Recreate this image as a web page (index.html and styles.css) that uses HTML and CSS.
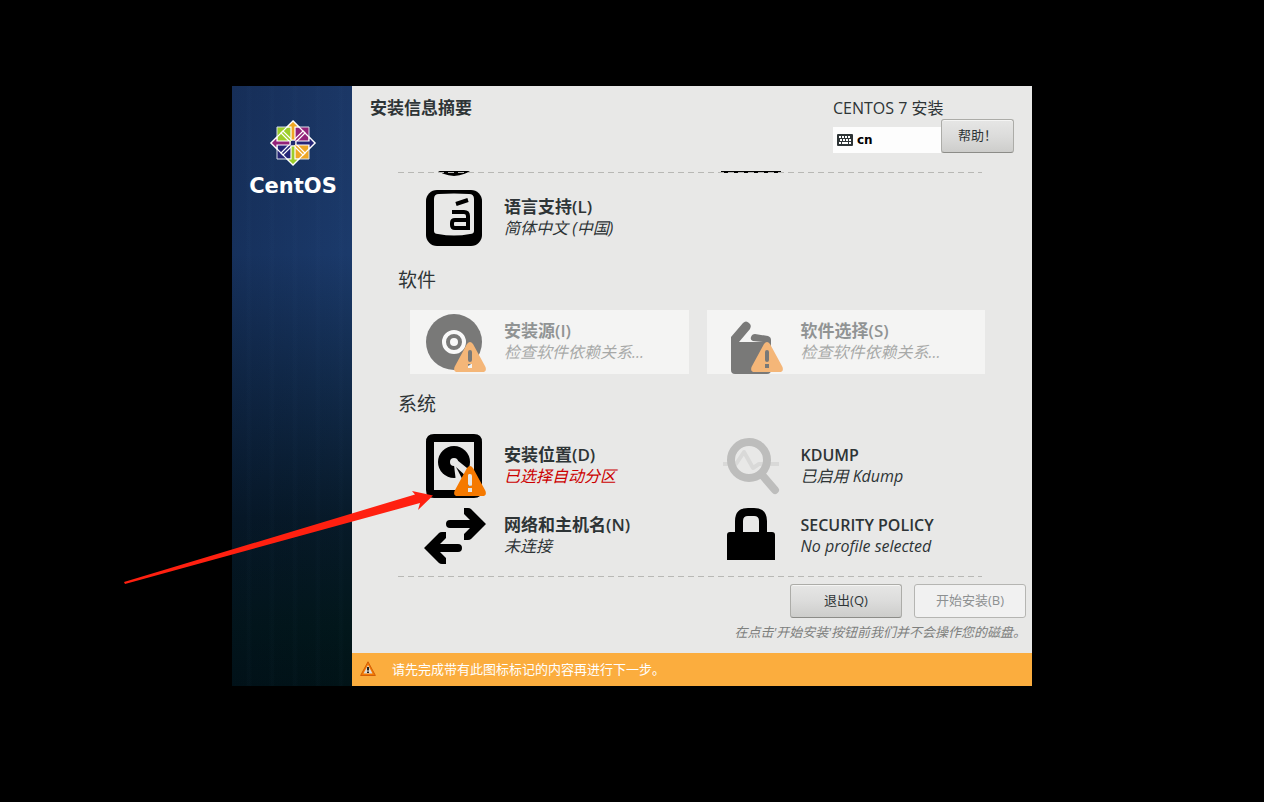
FILE: index.html
```html
<!DOCTYPE html>
<html lang="zh-CN">
<head>
<meta charset="utf-8">
<title>安装信息摘要</title>
<link rel="stylesheet" href="styles.css">
</head>
<body>
<svg class="defs" aria-hidden="true">
  <symbol id="warn" viewBox="0 0 64 64">
    <path fill="#f57900" fill-rule="evenodd" d="M45 34Q48 30 51 34L63.500 57Q65 62 60.500 62H35.500Q31 62 32.500 57ZM48 40Q46 40 46 42V50Q46 52 48 52T50 50V42Q50 40 48 40ZM46 54V58H50V54Z"/>
  </symbol>
</svg>
<div class="window">
  <aside class="sidebar">
    <svg class="emblem" viewBox="-24 -24 48 48" aria-hidden="true">
      <g stroke="#d8dfe8" stroke-width="1">
        <path fill="#9ccd2a" d="M-16-16H-1V-1H-16Z"/><path fill="#932279" d="M1-16H16V-1H1Z"/>
        <path fill="#262577" d="M-16 1H-1V16H-16Z"/><path fill="#efa724" d="M1 1H16V16H1Z"/>
      </g>
      <g stroke="#fff" stroke-width="1.200" fill="none">
        <path d="M0-22L22 0L0 22L-22 0Z"/>
        <path fill="#9ccd2a" d="M-3-1L-12-10L-10-12L-1-3"/><path fill="#932279" d="M3-1L12-10L10-12L1-3"/>
        <path fill="#262577" d="M-3 1L-12 10L-10 12L-1 3"/><path fill="#efa724" d="M3 1L12 10L10 12L1 3"/>
        <path fill="#efa724" d="M0-22L6-16H2V-3H-2V-16H-6Z"/><path fill="#262577" d="M22 0L16 6V2H3V-2H16V-6Z"/>
        <path fill="#9ccd2a" d="M0 22L6 16H2V3H-2V16H-6Z"/><path fill="#932279" d="M-22 0L-16 6V2H-3V-2H-16V-6Z"/>
      </g>
      <path fill="#202c70" d="M-2-2H2V2H-2Z"/>
    </svg>
    <div class="brand">CentOS</div>
  </aside>

  <main class="content">
    <header class="header">
      <h1 class="page-title">安装信息摘要</h1>
      <div class="header-tools">
        <div class="product">
          <div class="product-name">CENTOS 7 安装</div>
          <button class="layout-button" type="button">
            <svg class="layout-icon" viewBox="0 0 16 12" aria-hidden="true"><rect width="16" height="12" rx="1" fill="#2e3436"/><path stroke="#fff" stroke-width="2" d="M2 3H14" stroke-dasharray="2 1"/><path stroke="#fff" stroke-width="2" d="M3 6H14" stroke-dasharray="2 1"/><path stroke="#fff" stroke-width="2" d="M2 9H4M5 9H11M12 9H14"/></svg>
            cn
          </button>
        </div>
        <button class="button help" type="button">帮助！</button>
      </div>
    </header>

    <div class="viewport">
      <div class="row clipped">
        <svg class="icon" viewBox="0 0 64 64" aria-hidden="true"><circle cx="32" cy="32" r="28"/></svg>
        <svg class="icon" viewBox="0 0 64 64" aria-hidden="true"><rect x="2" y="16" width="60" height="41" rx="1"/></svg>
      </div>
      <div class="row">
        <button class="spoke" type="button">
          <svg class="icon" viewBox="0 0 64 64" aria-hidden="true"><rect x="4" y="4" width="56" height="56" rx="11"/><path fill="#e8e8e7" d="M17 8Q32 7 47 8Q52 8 52 13V45Q52 48 48 48Q32 51 16 48Q12 48 12 45V13Q12 8 17 8Z"/><path fill="none" stroke="#000" stroke-width="4" d="M34 18L46 14M30 26H42Q46 26 46 30V42H33Q30 42 30 39V37Q30 34 33 34H46"/></svg>
          <span class="text"><span class="name">语言支持(L)</span><span class="status">简体中文 (中国)</span></span>
        </button>
      </div>

      <h2 class="section">软件</h2>
      <div class="row">
        <button class="spoke" type="button" disabled>
          <svg class="icon" viewBox="0 0 64 64" aria-hidden="true"><circle cx="32" cy="32" r="28"/><circle cx="32" cy="32" r="10" fill="none" stroke="#fff" stroke-width="4"/><circle cx="32" cy="32" r="4" fill="#fff"/><use href="#warn"/></svg>
          <span class="text"><span class="name">安装源(I)</span><span class="status">检查软件依赖关系...</span></span>
        </button>
        <button class="spoke" type="button" disabled>
          <svg class="icon" viewBox="0 0 64 64" aria-hidden="true"><path d="M12 32L16 30L20 32H48L52 30V60Q52 64 48 64H16Q12 64 12 60Z"/><path d="M12 33V27L24 13Q27 10 30 13Q33 15 31 19L20 32ZM36 24L49 26Q52 27 52 30V34H44V32L34 31Q31 30 32 27Q33 24 36 24Z"/><use href="#warn"/></svg>
          <span class="text"><span class="name">软件选择(S)</span><span class="status">检查软件依赖关系...</span></span>
        </button>
      </div>

      <h2 class="section">系统</h2>
      <div class="row">
        <button class="spoke" type="button">
          <svg class="icon" viewBox="0 0 64 64" aria-hidden="true"><path fill-rule="evenodd" d="M12 0H52Q60 0 60 8V56Q60 64 52 64H12Q4 64 4 56V8Q4 0 12 0ZM12 8V56H52V8Z"/><circle cx="32" cy="28" r="16"/><circle cx="32" cy="28" r="4" fill="#e8e8e7"/><path fill="#e8e8e7" d="M32 31L35 26L50 38V48H34Z"/><path d="M34 33L46 44L50 54H45Z"/><use href="#warn"/><path fill="#e8e8e7" d="M46 42Q46 40 48 40V48L50 44V50Q50 52 48 52T46 50ZM48 54H50V58H46V56H48Z"/></svg>
          <span class="text"><span class="name">安装位置(D)</span><span class="status alert">已选择自动分区</span></span>
        </button>
        <button class="spoke" type="button">
          <svg class="icon" viewBox="0 0 64 64" aria-hidden="true"><path fill="none" stroke="#d9d9d8" stroke-width="4" stroke-linejoin="round" d="M4 30H17L25 18L34 34L40 30H60"/><circle cx="30" cy="26" r="18" fill="none" stroke="#bdbdbc" stroke-width="8"/><path stroke="#bdbdbc" stroke-width="8" stroke-linecap="round" d="M44 42L56 56"/></svg>
          <span class="text"><span class="name latin">KDUMP</span><span class="status">已启用 Kdump</span></span>
        </button>
        <button class="spoke" type="button">
          <svg class="icon" viewBox="0 0 64 64" aria-hidden="true"><path d="M42 4H46Q48 4 49 5L64 20L49 35Q48 36 46 36H42V30L48 24H28Q24 24 24 20T28 16H48L42 10Z"/><path d="M24 28H20Q18 28 17 29L2 44L17 59Q18 60 20 60H24V54L18 48H36Q40 48 40 44T36 40H18L24 34Z"/></svg>
          <span class="text"><span class="name">网络和主机名(N)</span><span class="status">未连接</span></span>
        </button>
        <button class="spoke" type="button">
          <svg class="icon" viewBox="0 0 64 64" aria-hidden="true"><rect x="8" y="28" width="48" height="28" rx="3"/><path d="M8 40H56V56H8Z"/><path fill="none" stroke="#000" stroke-width="8" d="M20 32V17Q20 8 29 8H35Q44 8 44 17V32"/></svg>
          <span class="text"><span class="name latin">SECURITY POLICY</span><span class="status">No profile selected</span></span>
        </button>
      </div>
    </div>

    <footer class="footer">
      <div class="actions">
        <button class="button" type="button">退出(Q)</button>
        <button class="button" type="button" disabled>开始安装(B)</button>
      </div>
      <p class="hint">在点击'开始安装'按钮前我们并不会操作您的磁盘。</p>
    </footer>
    <div class="notice">
      <svg class="notice-icon" viewBox="0 0 16 16" aria-hidden="true"><path fill="#f57900" stroke="#d25f08" d="M8 .8L15.400 14.500H.6Z" stroke-linejoin="round"/><path fill="#dfdcd5" d="M8 4L12.500 12.500H3.500Z"/><path stroke="#222" stroke-width="2" d="M8 6V9.500M8 10.500V12"/></svg>
      <span>请先完成带有此图标标记的内容再进行下一步。</span>
    </div>
  </main>

  <svg class="pointer" viewBox="0 0 312 96" aria-hidden="true"><path fill="#ff2010" d="M0 92L291 4.500L288 1L309 5.500L294 20L296 13L1 94Z"/></svg>
</div>
</body>
</html>
```
FILE: styles.css
```css
* { box-sizing: border-box; }

body {
  margin: 0;
  padding: 86px 16px 16px;
  background: #000;
  color: #2e3436;
  font-family: "Open Sans", "Noto Sans CJK SC", sans-serif;
  font-size: 13px;
}

button { font: inherit; color: inherit; }

.defs { display: none; }

.window {
  position: relative;
  display: flex;
  max-width: 800px;
  margin: 0 auto;
  background: #e8e8e7;
}

.sidebar {
  display: flex;
  flex: 0 0 120px;
  flex-direction: column;
  align-items: center;
  padding: 33px 0 0 2px;
  background:
    repeating-linear-gradient(90deg, transparent 0 14px, rgba(90, 140, 190, 0.02) 16px 18px, transparent 20px 23px),
    linear-gradient(90deg, rgba(2, 10, 30, 0.2), transparent),
    linear-gradient(#1b3766, #1b3a6b 28%, #112a4a 50%, #071a29 72%, #02171b 90%, #011317);
}

.emblem { width: 48px; height: 48px; }

.brand {
  color: #fff;
  font: bold 21px/24px "DejaVu Sans", sans-serif;
  margin-top: 7px;
}

.content { flex: 1; min-width: 0; }

.header {
  display: flex;
  justify-content: space-between;
  align-items: flex-start;
  padding: 10px 18px 18px;
}

.page-title { margin: 0; font-size: 17px; line-height: 24px; }

.header-tools { display: flex; align-items: flex-end; }

.product { width: 108px; }

.product-name {
  font-size: 16px;
  line-height: 24px;
  margin-bottom: 7px;
  white-space: nowrap;
}

.layout-button {
  display: flex;
  align-items: center;
  gap: 4px;
  width: 100%;
  height: 26px;
  padding: 0 4px;
  border: 0;
  background: #fdfdfd;
  color: #000;
  font: bold 12px/16px "DejaVu Sans", sans-serif;
}

.layout-icon { width: 16px; height: 12px; }

.button {
  min-width: 112px;
  height: 34px;
  padding: 0 16px 4px;
  border: 1px solid #acaca8;
  border-bottom-color: #8c8c88;
  border-radius: 3px;
  background: linear-gradient(#e6e6e5, #dcdcdb 50%, #cdcdcb);
  box-shadow: inset 0 1px #f5f5f4;
}

.button:disabled {
  border-color: #b5b5b2;
  background: #f1f1f1;
  box-shadow: none;
  color: #8d9091;
}

.help { min-width: 73px; font-family: "Noto Sans CJK TC", sans-serif; }

.viewport {
  position: relative;
  margin: 0 46px;
  padding: 0 0 9px 12px;
}

.viewport::before,
.viewport::after {
  content: "";
  position: absolute;
  left: 0;
  right: 4px;
  height: 1px;
  background: repeating-linear-gradient(90deg, #b8b8b5 0 6px, transparent 6px 10px);
}

.viewport::before { top: 1px; }
.viewport::after { bottom: 0; }

.row {
  display: grid;
  grid-template-columns: 1fr 1fr;
  gap: 6px 18px;
  margin-right: 1px;
}

.clipped {
  grid-template-rows: 9px;
  align-items: end;
  margin-bottom: 6px;
  overflow: hidden;
}

.clipped .icon { margin-left: 12px; }

.spoke {
  display: flex;
  align-items: center;
  gap: 18px;
  min-width: 0;
  padding: 0 12px;
  border: 0;
  background: transparent;
  text-align: left;
}

.spoke:disabled { background: #f4f4f3; }
.spoke:disabled > * { opacity: 0.5; }
.spoke:disabled .status { color: #5c605e; }

.icon { flex: none; display: block; width: 64px; height: 64px; }

.text { display: flex; flex-direction: column; min-width: 0; padding-bottom: 2px; }

.name { font-size: 17px; font-weight: 600; line-height: 22px; white-space: nowrap; }

.latin { font-size: 16px; }

.status { font-size: 16px; font-style: italic; line-height: 21px; white-space: nowrap; }

.alert { color: #cc0000; }

.section {
  margin: 0 0 0 -12px;
  padding: 18px 0;
  font-size: 19px;
  font-weight: 400;
  line-height: 24px;
}

.footer { padding: 7px 6px 11px; }

.actions { display: flex; justify-content: flex-end; gap: 12px; }

.hint {
  margin: 4px 0 0;
  color: #7e807e;
  font-style: italic;
  line-height: 20px;
  text-align: right;
}

.notice {
  display: flex;
  align-items: center;
  gap: 16px;
  min-height: 33px;
  padding: 0 8px 2px;
  background: #fbad3e;
  color: #fff;
}

.notice-icon { flex: none; width: 16px; height: 16px; }

.pointer {
  position: absolute;
  left: -108px;
  top: 404px;
  width: 312px;
  height: 96px;
  pointer-events: none;
}
```
